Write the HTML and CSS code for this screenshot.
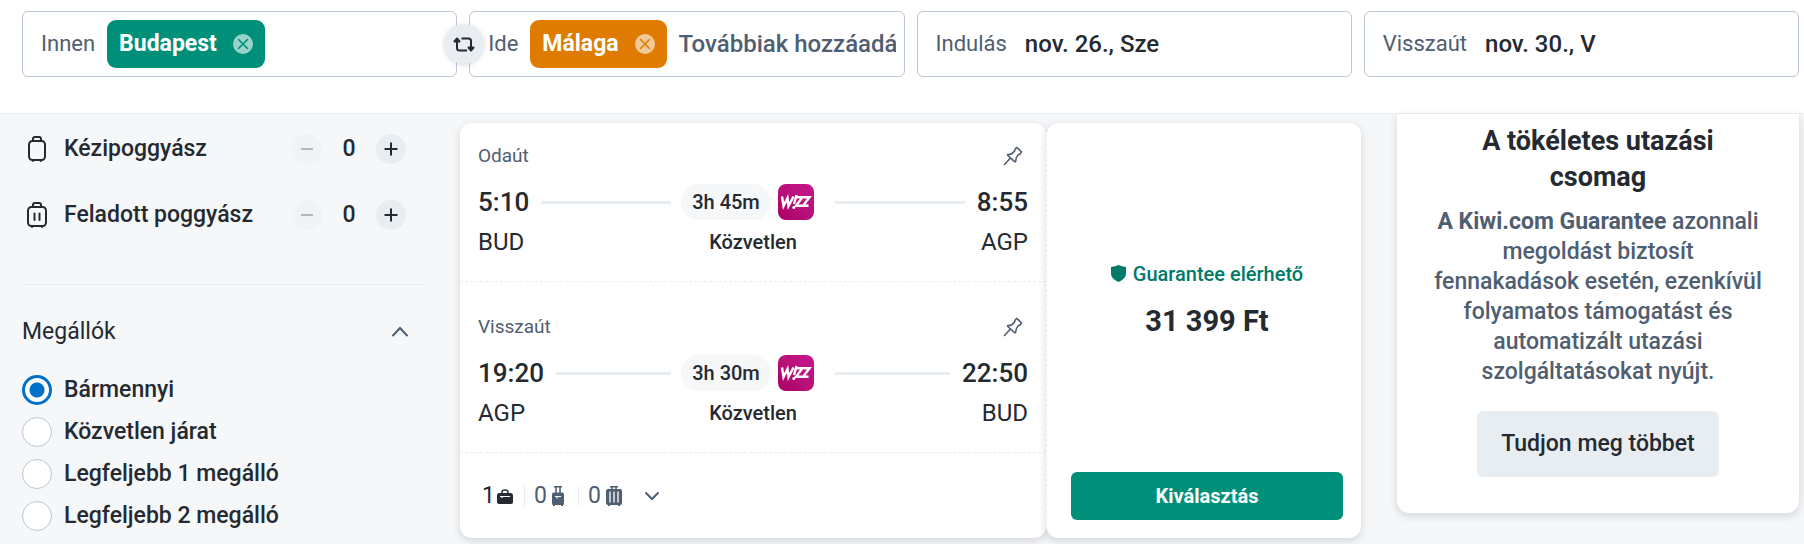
FILE: index.html
```html
<!DOCTYPE html>
<html lang="hu">
<head>
    <meta charset="UTF-8">
    <meta name="viewport" content="width=device-width, initial-scale=1.0">
    <title>Budapest - Málaga</title>
    <link rel="stylesheet" href="styles.css">
</head>
<body>
    <svg class="sprite" aria-hidden="true">
        <symbol id="close" viewBox="0 0 20 20">
            <circle cx="10" cy="10" r="10" fill="#fff" fill-opacity="0.6"/>
            <path d="M5.5 5.5l9 9M14.5 5.5l-9 9" stroke="currentColor" stroke-width="1.6" stroke-linecap="round"/>
        </symbol>
        <symbol id="pin" viewBox="0 0 20 20">
            <path d="M1.5 18.5L7 12.5M5 8.5Q8.5 9 11.8 4.7Q11.3 3.5 13.5 1.5Q16 3 18.5 6Q17.5 8.5 15.5 8.5Q12.5 11.5 12.7 15.3Q12 15.9 11.3 15.3L4.8 9.5Q4.4 8.9 5 8.5Z" fill="none" stroke="currentColor" stroke-width="1.6" stroke-linejoin="round" stroke-linecap="round"/>
        </symbol>
        <symbol id="wizz" viewBox="0 0 36 36">
            <linearGradient id="pink" x1="1" y1="0" x2="0" y2="1">
                <stop offset="0" stop-color="#c6168d"/>
                <stop offset="0.5" stop-color="#b9117a"/>
                <stop offset="1" stop-color="#a90064"/>
            </linearGradient>
            <rect width="36" height="36" rx="8" fill="url(#pink)"/>
            <g fill="none" stroke="#fff" stroke-width="2.4" stroke-linejoin="miter">
                <path d="M4 12.5l1.5 9.5 4-8 1 8 5-9.5"/>
                <path d="M18.5 11l-2.5 9"/>
                <path d="M18 13.2h6.500l-6.500 8.500h6"/>
                <path d="M25.500 13.2h6l-6.500 8.500h5.500"/>
            </g>
            <circle cx="15.800" cy="23.500" r="1.500" fill="#fff"/>
        </symbol>
    </svg>

    <header class="kereso">
        <div class="mezo">
            <label for="innen">Innen</label>
            <span class="varos zold">Budapest
                <button type="button" aria-label="Budapest törlése"><svg><use href="#close"/></svg></button>
            </span>
            <input type="text" id="innen">
        </div>
        <div class="mezo">
            <button type="button" class="csere" aria-label="Csere">
                <svg viewBox="0 0 24 24" fill="none" stroke="#252a31" stroke-width="2" stroke-linejoin="round">
                    <path d="M5 8v8q0 2.500 2.500 2.500H15M9.500 6.500h7Q19 6.500 19 9v7"/>
                    <path d="M2.500 9.500L5 6.500l2.500 3zM16.500 15.500l2.500 3 2.500-3z" fill="#252a31"/>
                </svg>
            </button>
            <label for="ide">Ide</label>
            <span class="varos narancs">Málaga
                <button type="button" aria-label="Málaga törlése"><svg><use href="#close"/></svg></button>
            </span>
            <input type="text" id="ide" placeholder="Továbbiak hozzáadása">
        </div>
        <div class="mezo datum">
            <label for="indulas">Indulás</label>
            <input type="text" id="indulas" value="nov. 26., Sze">
        </div>
        <div class="mezo datum">
            <label for="visszaut">Visszaút</label>
            <input type="text" id="visszaut" value="nov. 30., V">
        </div>
    </header>

    <main class="tartalom">
        <aside class="szurok">
            <div class="poggyasz">
                <svg viewBox="0 0 30 30" fill="none" stroke="#252a31" stroke-width="2" stroke-linecap="round">
                    <rect x="7" y="7" width="16" height="19" rx="3.5"/>
                    <path d="M11 6.500V5q0-2 2-2h4q2 0 2 2v1.500M11 26.500v.5M19 26.500v.5"/>
                </svg>
                <span class="nev">Kézipoggyász</span>
                <button type="button" disabled aria-label="Kevesebb kézipoggyász"><svg viewBox="0 0 30 30"><path d="M9 15h12"/></svg></button>
                <output>0</output>
                <button type="button" aria-label="Több kézipoggyász"><svg viewBox="0 0 30 30"><path d="M8.500 15h13M15 8.500v13"/></svg></button>
            </div>
            <div class="poggyasz">
                <svg viewBox="0 0 30 30" fill="none" stroke="#252a31" stroke-width="2" stroke-linecap="round">
                    <rect x="6" y="7" width="18" height="19" rx="3.5"/>
                    <path d="M11 6.500V5q0-2 2-2h4q2 0 2 2v1.500M10 26.500v.5M20 26.500v.5M12.500 13.500v6.500M17.500 13.500v6.500"/>
                </svg>
                <span class="nev">Feladott poggyász</span>
                <button type="button" disabled aria-label="Kevesebb feladott poggyász"><svg viewBox="0 0 30 30"><path d="M9 15h12"/></svg></button>
                <output>0</output>
                <button type="button" aria-label="Több feladott poggyász"><svg viewBox="0 0 30 30"><path d="M8.500 15h13M15 8.500v13"/></svg></button>
            </div>

            <section class="megallok">
                <button type="button" class="cim">Megállók
                    <svg viewBox="0 0 18 12"><path d="M2 9.500l7-7.500 7 7.500"/></svg>
                </button>
                <label><input type="radio" name="megallo" checked>Bármennyi</label>
                <label><input type="radio" name="megallo">Közvetlen járat</label>
                <label><input type="radio" name="megallo">Legfeljebb 1 megálló</label>
                <label><input type="radio" name="megallo">Legfeljebb 2 megálló</label>
            </section>
        </aside>

        <article class="jarat">
            <div class="reszletek">
                <section class="ut">
                    <div class="fejlec">Odaút <svg><use href="#pin"/></svg></div>
                    <div class="utvonal">
                        <div class="vonal"><time>5:10</time></div>
                        <div class="kozep"><span class="ido">3h 45m</span><svg><use href="#wizz"/></svg></div>
                        <div class="vonal vege"><time>8:55</time></div>
                        <span class="kod">BUD</span>
                        <span class="tipus">Közvetlen</span>
                        <span class="kod jobb">AGP</span>
                    </div>
                </section>
                <section class="ut vissza">
                    <div class="fejlec">Visszaút <svg><use href="#pin"/></svg></div>
                    <div class="utvonal">
                        <div class="vonal"><time>19:20</time></div>
                        <div class="kozep"><span class="ido">3h 30m</span><svg><use href="#wizz"/></svg></div>
                        <div class="vonal vege"><time>22:50</time></div>
                        <span class="kod">AGP</span>
                        <span class="tipus">Közvetlen</span>
                        <span class="kod jobb">BUD</span>
                    </div>
                </section>
                <div class="csomagok">
                    <span class="csomag van">1
                        <svg class="taska" viewBox="0 0 16 20">
                            <path d="M2.500 7h11Q16 7 16 9.500V16q0 2-2 2H2q-2 0-2-2V9.500Q0 7 2.500 7z" fill="currentColor"/>
                            <path d="M5 7V6q0-2 3-2t3 2v1" fill="none" stroke="currentColor" stroke-width="1.5"/>
                            <path d="M3 10.500h10M5 10.500v1.500" stroke="#fff" stroke-width="1.2"/>
                        </svg>
                    </span>
                    <span class="csomag">0
                        <svg class="kezi" viewBox="0 0 12 20">
                            <path d="M2 .8h8M4 1v6M8 1v6" fill="none" stroke="currentColor" stroke-width="1.5"/>
                            <path d="M2 6.500h8q2 0 2 2V17q0 2-1 2v1H9v-1H3v1H1v-1q-1 0-1-2V8.500q0-2 2-2z" fill="currentColor"/>
                            <path d="M3 10.500h6M5 10.500v2" stroke="#fff" stroke-width="1.2"/>
                        </svg>
                    </span>
                    <span class="csomag">0
                        <svg class="taska" viewBox="0 0 16 20">
                            <path d="M4 .8h8M6 1v3M10 1v3" fill="none" stroke="currentColor" stroke-width="1.5"/>
                            <path d="M2 3h12q2 0 2 2v12q0 2-2 2v1h-2v-1H4v1H2v-1q-2 0-2-2V5q0-2 2-2z" fill="currentColor"/>
                            <path d="M4 5.500v11M8 5.500v11M12 5.500v11" stroke="#fff" stroke-width="1.3"/>
                        </svg>
                    </span>
                    <button type="button" aria-label="Részletek"><svg viewBox="0 0 14 10"><path d="M1 2l6 6 6-6"/></svg></button>
                </div>
            </div>

            <div class="ar">
                <div class="osszeg">
                    <span class="garancia">
                        <svg viewBox="0 0 15 17"><path d="M7.500 0Q11 1.500 15 2v6.500Q15 14 7.500 17 0 14 0 8.500V2Q4 1.500 7.500 0z" fill="#007a69"/></svg>
                        Guarantee elérhető
                    </span>
                    <strong>31 399 Ft</strong>
                </div>
                <button type="button">Kiválasztás</button>
            </div>
        </article>

        <aside class="ajanlo">
            <h2>A tökéletes utazási<br>csomag</h2>
            <p><strong>A Kiwi.com Guarantee</strong> azonnali<br>megoldást biztosít<br>fennakadások esetén, ezenkívül<br>folyamatos támogatást és<br>automatizált utazási<br>szolgáltatásokat nyújt.</p>
            <button type="button">Tudjon meg többet</button>
        </aside>
    </main>
</body>
</html>
```

FILE: styles.css
```css
* {
    box-sizing: border-box;
}

body {
    margin: 0;
    min-height: 100vh;
    font-family: Roboto, sans-serif;
    font-size: 23px;
    line-height: 30px;
    color: #252a31;
    background-color: #f5f7f9;
}

button, input {
    font: inherit;
    color: inherit;
    border: none;
    padding: 0;
    margin: 0;
}

button {
    cursor: pointer;
}

svg {
    display: block;
    flex: none;
}

.sprite {
    position: absolute;
    width: 0;
    height: 0;
}

/* Kereső */
.kereso {
    display: grid;
    grid-template-columns: repeat(4, minmax(0, 1fr));
    gap: 12px;
    padding: 11px 5px 36px 22px;
    background-color: #fff;
    border-bottom: 1px solid #e8edf1;
}

.mezo {
    position: relative;
    display: flex;
    align-items: center;
    gap: 12px;
    height: 66px;
    padding: 0 8px 0 18px;
    border: 1px solid #bac7d5;
    border-radius: 6px;
}

.mezo label {
    font-size: 22px;
    color: #4f5e71;
}

.mezo input {
    flex: 1;
    min-width: 0;
    font-size: 24px;
    font-weight: 500;
    background: none;
    outline: none;
}

.mezo input::placeholder {
    color: #4f5e71;
}

.datum {
    gap: 18px;
}

.varos {
    display: flex;
    align-items: center;
    gap: 16px;
    height: 48px;
    padding: 0 12px;
    border-radius: 9px;
    font-weight: 700;
    color: #fff;
}

.varos button {
    background: none;
}

.varos svg {
    width: 20px;
    height: 20px;
}

.zold {
    background-color: #00907a;
}

.zold button {
    color: #00907a;
}

.narancs {
    background-color: #df7b00;
}

.narancs button {
    color: #df7b00;
}

/* a két mező közötti résre ül */
.csere {
    position: absolute;
    left: -26px;
    display: flex;
    align-items: center;
    justify-content: center;
    width: 40px;
    height: 40px;
    border-radius: 50%;
    background-color: #e8edf1;
    box-shadow: 0 1px 4px rgba(37, 42, 49, 0.16);
}

.csere svg {
    width: 24px;
    height: 24px;
}

.tartalom {
    display: grid;
    grid-template-columns: 402px minmax(0, 1fr) 402px;
    gap: 36px;
    align-items: start;
    padding: 0 5px 7px 22px;
}

/* Szűrők */
.poggyasz {
    display: flex;
    align-items: center;
    height: 30px;
    margin-top: 36px;
    padding-right: 18px;
    font-weight: 500;
}

.poggyasz:first-child {
    margin-top: 20px;
}

.poggyasz svg {
    width: 30px;
    height: 30px;
}

.nev {
    flex: 1;
    padding-left: 12px;
}

.poggyasz output {
    width: 54px;
    text-align: center;
}

.poggyasz button {
    border-radius: 50%;
    background-color: #e8edf1;
}

.poggyasz button:disabled {
    opacity: 0.3;
}

.poggyasz button path {
    stroke: #252a31;
    stroke-width: 2;
}

.megallok {
    display: flex;
    flex-direction: column;
    gap: 12px;
    margin-top: 54px;
    padding-top: 32px;
    border-top: 1px solid #e8edf1;
}

.cim {
    display: flex;
    align-items: center;
    justify-content: space-between;
    padding-right: 15px;
    margin-bottom: 16px;
    background: none;
}

.cim svg {
    width: 18px;
    height: 12px;
}

.cim path, .csomagok button path {
    fill: none;
    stroke: #4f5e71;
    stroke-width: 2;
    stroke-linecap: round;
}

.megallok label {
    display: flex;
    gap: 12px;
    font-weight: 500;
}

.megallok input {
    appearance: none;
    width: 30px;
    height: 30px;
    border: 1px solid #bac7d5;
    border-radius: 50%;
    background-color: #fff;
}

.megallok input:checked {
    border: 3px solid #0070c9;
    background: radial-gradient(circle, #0070c9 7px, #fff 8px);
}

/* Járat */
.jarat {
    display: grid;
    grid-template-columns: minmax(0, 586fr) minmax(0, 315fr);
    margin-top: 9px;
}

.reszletek, .ar, .ajanlo {
    background-color: #fff;
    border-radius: 12px;
    box-shadow: 0 3px 9px rgba(37, 42, 49, 0.16);
}

.ut {
    padding: 21px 18px 24px;
    border-bottom: 1px dashed #e8edf1;
}

.vissza {
    padding-top: 33px;
}

.fejlec {
    display: flex;
    align-items: center;
    justify-content: space-between;
    padding-right: 5px;
    font-size: 19px;
    line-height: 24px;
    color: #4f5e71;
}

.fejlec svg {
    width: 20px;
    height: 20px;
}

.utvonal {
    display: grid;
    grid-template-columns: 1fr auto 1fr;
    row-gap: 7px;
    margin-top: 16px;
}

.vonal {
    display: flex;
    align-items: center;
    gap: 12px;
}

.vonal::after {
    content: "";
    flex: 1;
    height: 3px;
    background-color: #e8edf1;
}

.vege {
    flex-direction: row-reverse;
}

.utvonal time {
    font-size: 26px;
    font-weight: 500;
}

.kozep {
    display: flex;
    gap: 7px;
    padding: 0 21px 0 10px;
}

.kozep svg {
    width: 36px;
    height: 36px;
}

.ido {
    width: 90px;
    border-radius: 18px;
    background-color: #f5f7f9;
    font-size: 20px;
    font-weight: 500;
    line-height: 36px;
    text-align: center;
}

.kod {
    font-size: 24px;
}

.tipus {
    font-size: 20px;
    font-weight: 500;
    text-align: center;
}

.jobb {
    text-align: right;
}

.csomagok {
    display: flex;
    align-items: center;
    height: 85px;
    padding-left: 22px;
}

.csomag {
    display: flex;
    align-items: center;
    gap: 5px;
    height: 20px;
    padding-right: 14px;
    margin-right: 9px;
    border-right: 1px solid #e8edf1;
    color: #4f5e71;
}

.csomag:nth-child(3) {
    border: none;
}

.csomagok .van {
    gap: 2px;
    padding-right: 11px;
    color: #252a31;
}

.taska {
    width: 16px;
    height: 20px;
}

.kezi {
    width: 12px;
    height: 20px;
}

.csomagok button {
    background: none;
}

.csomagok button svg {
    width: 14px;
    height: 10px;
}

.ar {
    display: flex;
    flex-direction: column;
    padding: 18px 18px 18px 24px;
    border-left: 1px dashed #e8edf1;
}

.osszeg {
    flex: 1;
    display: flex;
    flex-direction: column;
    align-items: center;
    justify-content: center;
    gap: 14px;
    padding-bottom: 16px;
}

.osszeg strong {
    font-size: 29px;
    line-height: 36px;
}

.garancia {
    display: flex;
    align-items: center;
    gap: 7px;
    font-size: 20px;
    font-weight: 500;
    color: #007a69;
}

.garancia svg {
    width: 15px;
    height: 17px;
}

.ar button {
    height: 48px;
    border-radius: 6px;
    background-color: #00907a;
    color: #fff;
    font-size: 20px;
    font-weight: 700;
}

/* Ajánló */
.ajanlo {
    padding: 9px 36px 36px;
    border-radius: 0 0 12px 12px;
    text-align: center;
}

.ajanlo h2 {
    margin: 0 0 12px;
    font-size: 27px;
    line-height: 36px;
}

.ajanlo p {
    margin: 0 0 24px;
    font-weight: 500;
    color: #4f5e71;
}

.ajanlo button {
    height: 66px;
    padding: 0 24px;
    border-radius: 6px;
    background-color: #e8edf1;
    font-weight: 500;
}
```
